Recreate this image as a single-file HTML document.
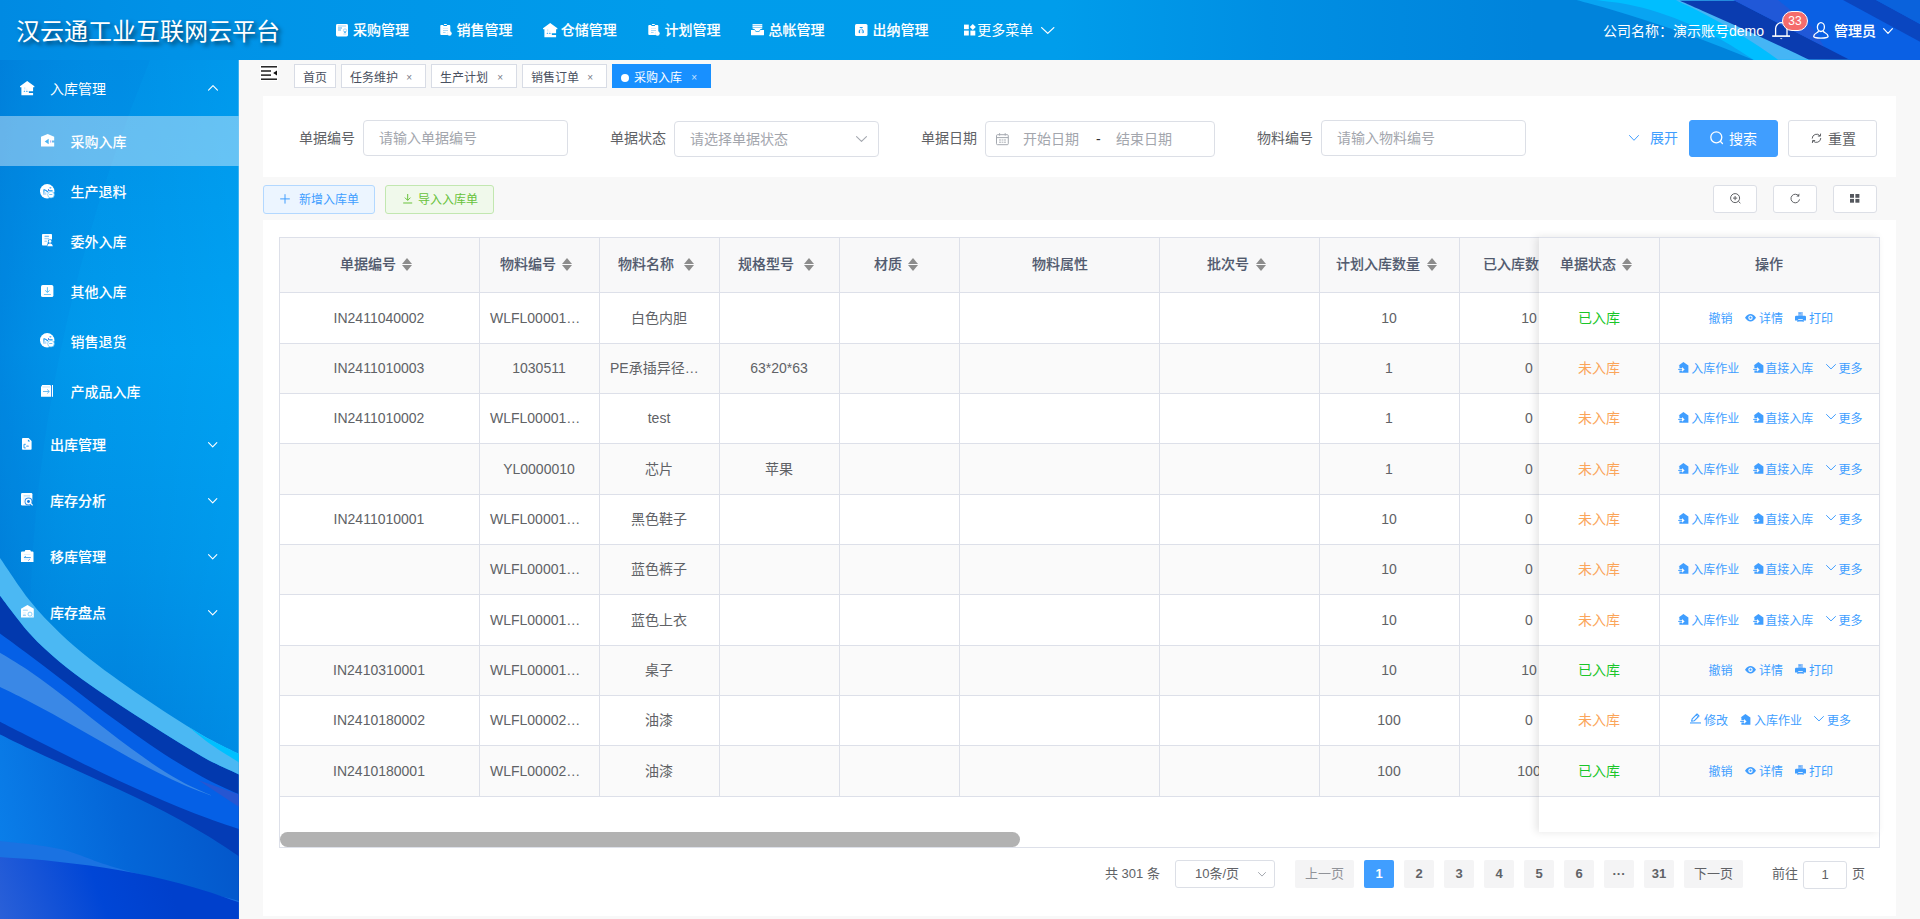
<!DOCTYPE html>
<html lang="zh-CN"><head><meta charset="utf-8"><title>采购入库</title><style>
*{box-sizing:border-box;margin:0;padding:0}
html,body{width:1920px;height:919px;overflow:hidden;background:#f8f8f8;font-family:"Liberation Sans","Noto Sans CJK SC",sans-serif;font-size:14px;color:#606266}
.a{position:absolute}
.t{position:absolute;white-space:nowrap;line-height:20px;height:20px}
#hdr{position:absolute;left:0;top:0;width:1920px;height:60px;overflow:hidden;background:#0093e6}
#side{position:absolute;left:0;top:60px;width:239px;height:859px;overflow:hidden;background:#f8f8f8}
.w{color:#fff}
.b{font-weight:500;-webkit-text-stroke:.12px currentColor}
.bb{font-weight:700}
.m{font-weight:500}
.card{position:absolute;background:#fff}
.inp{position:absolute;border:1px solid #dcdfe6;border-radius:4px;background:#fff}
.ph{color:#a3a6ad}
.tag{position:absolute;top:64px;height:24px;border:1px solid #d8dce5;background:#fff;font-size:12px;color:#495060;line-height:22px;white-space:nowrap}
.btn{position:absolute;border-radius:3px;border:1px solid #dcdfe6;background:#fff}
.th{position:absolute;top:0;height:54px;line-height:54px;font-weight:700;color:#515a6e;text-align:center;white-space:nowrap;font-size:14px}
.vl{position:absolute;width:1px;background:#dde0e9}
.hl{position:absolute;height:1px;background:#dde0e9}
.td{position:absolute;text-align:center;white-space:nowrap;color:#606266;font-size:14px;height:20px;line-height:20px}
.lk{color:#409eff;font-size:12px}
.pg{position:absolute;top:860px;height:28px;line-height:28px;border-radius:2px;background:#f4f4f5;color:#606266;font-weight:700;font-size:13px;text-align:center;min-width:30px}
svg{position:absolute;overflow:visible}
</style></head><body>
<div id="hdr"><svg style="left:0;top:0" width="1920" height="60" viewBox="0 0 1920 60" preserveAspectRatio="none">
<defs>
<linearGradient id="hg" x1="0" y1="0" x2="1" y2="0">
<stop offset="0" stop-color="#008ae2"/><stop offset=".09" stop-color="#0092e7"/><stop offset=".35" stop-color="#009ceb"/><stop offset=".55" stop-color="#009deb"/><stop offset=".66" stop-color="#008fe3"/><stop offset=".8" stop-color="#0083db"/><stop offset="1" stop-color="#0083db"/>
</linearGradient>
<linearGradient id="hsoft" gradientUnits="userSpaceOnUse" x1="1590" y1="30" x2="1612" y2="-8">
<stop offset="0" stop-color="#0a9cf0" stop-opacity=".55"/><stop offset="1" stop-color="#06b0fa" stop-opacity="1"/>
</linearGradient>
</defs>
<rect width="1920" height="60" fill="url(#hg)"/>
<path d="M1574.0 -0.7 C1580.0 1.0 1598.1 5.8 1610.1 9.3 C1622.2 12.9 1634.2 16.6 1646.3 20.4 C1658.3 24.3 1670.4 28.4 1682.4 32.6 C1694.5 36.8 1706.5 41.3 1718.6 45.9 C1730.6 50.5 1748.7 57.8 1754.7 60.2 L1920 60 L1920 0Z" fill="#08a4f2"/>
<path d="M1595.0 -0.1 C1600.3 0.6 1616.2 2.2 1626.8 4.2 C1637.4 6.3 1648.0 9.0 1658.6 12.4 C1669.2 15.8 1679.8 19.8 1690.4 24.4 C1701.0 29.1 1711.6 34.4 1722.2 40.3 C1732.8 46.2 1748.7 56.8 1754.0 60.1 L1920 60 L1920 0Z" fill="#00beff"/>
<path d="M1676.0 0.3 C1679.4 1.9 1689.6 6.6 1696.4 10.0 C1703.2 13.4 1710.0 17.0 1716.8 20.8 C1723.6 24.5 1730.4 28.5 1737.2 32.6 C1744.0 36.8 1750.8 41.1 1757.6 45.6 C1764.4 50.1 1774.6 57.3 1778.0 59.7 L1920 60 L1920 0Z" fill="#45b5f5"/>
<path d="M1680.0 0.7 C1684.3 2.6 1697.2 8.3 1705.8 12.2 C1714.4 16.0 1723.0 19.9 1731.6 23.8 C1740.2 27.7 1748.8 31.6 1757.4 35.6 C1766.0 39.5 1774.6 43.5 1783.2 47.5 C1791.8 51.5 1804.7 57.6 1809.0 59.6 L1920 60 L1920 0Z" fill="#0a3cb0"/>
<path d="M1733.5 0 L1920 0 L1920 60 L1850 60Z" fill="#0a60e4"/>
<path d="M1733.5 0 L1778 0 L1812 27 L1824 46.6Z" fill="#2058d8"/>
<path d="M1843 0 L1920 41.7 L1920 24 L1876 0Z" fill="#0a46c0"/>
<path d="M1876 0 L1920 24 L1920 0Z" fill="#0a62dc"/>
</svg><div class="t w" style="left:16px;top:14px;height:36px;line-height:36px;font-size:24px;text-shadow:3px 3px 4px rgba(0,0,0,.55)">汉云通工业互联网云平台</div><div class="t w b" style="left:353px;top:20px">采购管理</div><div class="t w b" style="left:456.6px;top:20px">销售管理</div><div class="t w b" style="left:560.8px;top:20px">仓储管理</div><div class="t w b" style="left:664.6px;top:20px">计划管理</div><div class="t w b" style="left:768.5px;top:20px">总帐管理</div><div class="t w b" style="left:872.5px;top:20px">出纳管理</div><div class="t w " style="left:977.3px;top:20px">更多菜单</div><svg style="left:336px;top:23.5px" width="12" height="12.4" viewBox="0 0 12 12.4" ><rect x="0" y="0" width="12" height="12.4" rx="1.4" fill="#fff"/><rect x="2" y="1.5" width="8" height="1" fill="#9fd4f7"/><rect x="2" y="3.5" width="4" height="1" fill="#55b4f2"/><rect x="2" y="5.5" width="3" height="1" fill="#55b4f2"/><circle cx="9" cy="6.5" r="1.6" fill="none" stroke="#9fd4f7" stroke-width="0.9"/><rect x="8" y="7.6" width="2" height="1" fill="#1a9af0"/><rect x="7.4" y="9.2" width="3" height="1.6" fill="#cfe9fb"/></svg><svg style="left:440.2px;top:24px" width="12" height="12" viewBox="0 0 12 12" ><path d="M0.3 2 Q0.3 1.1 1.2 1.1 L3.2 1.1 L3.6 2 L6.8 2 L7.2 1.1 L9.4 1.1 Q10.3 1.1 10.3 2 L10.3 11 L1.2 11 Q0.3 11 0.3 10.1Z" fill="#fff"/><rect x="3.9" y="0" width="3" height="1.1" rx="0.5" fill="#fff"/><rect x="3" y="3.9" width="5" height="0.9" fill="#cfe9fb"/><rect x="3" y="6" width="5" height="0.9" fill="#9fd4f7"/><rect x="3" y="8" width="2.6" height="0.9" fill="#9fd4f7"/><circle cx="9.5" cy="9.5" r="2.2" fill="#fff"/><path d="M7.6 8.2 A2.3 2.3 0 0 0 7.6 10.8" fill="none" stroke="#cfe9fb" stroke-width="0.6"/></svg><svg style="left:542.6px;top:22.6px" width="14.4" height="14.2" viewBox="0 0 14.4 14.2"><path d="M7.2 0 L14.4 5.2 L14.4 6.2 L13.1 6.2 L13.1 10.3 L8.6 10.3 L8.6 12.1 L13.1 12.1 L13.1 14.2 L1.4 14.2 L1.4 6.2 L0 6.2 L0 5.2Z" fill="#fff"/><rect x="4.1" y="6.3" width="1.2" height="2.2" fill="#cfe9fb"/><rect x="5.6" y="7.8" width="2" height="0.8" fill="#e2f2fc"/><rect x="3.7" y="9.7" width="1.5" height="1.1" rx="0.5" fill="#1a9af0"/><rect x="6" y="9.7" width="1.7" height="1.1" rx="0.5" fill="#1a9af0"/><path d="M8.9 10.3 L7.6 11.2 L8.9 12.1Z" fill="#fff"/><path d="M9.6 9.6 L8 11.2 L9.6 12.8" fill="none" stroke="#fff" stroke-width="0.1"/></svg><svg style="left:648.2px;top:24px" width="12" height="12" viewBox="0 0 12 12" ><path d="M0.3 2 Q0.3 1.1 1.2 1.1 L3.2 1.1 L3.6 2 L6.8 2 L7.2 1.1 L9.4 1.1 Q10.3 1.1 10.3 2 L10.3 11 L1.2 11 Q0.3 11 0.3 10.1Z" fill="#fff"/><rect x="3.9" y="0" width="3" height="1.1" rx="0.5" fill="#fff"/><rect x="3" y="3.9" width="5" height="0.9" fill="#cfe9fb"/><rect x="3" y="6" width="5" height="0.9" fill="#9fd4f7"/><rect x="3" y="8" width="2.6" height="0.9" fill="#9fd4f7"/><circle cx="9.5" cy="9.5" r="2.2" fill="#fff"/><path d="M7.6 8.2 A2.3 2.3 0 0 0 7.6 10.8" fill="none" stroke="#cfe9fb" stroke-width="0.6"/></svg><svg style="left:751px;top:24px" width="13" height="11.4" viewBox="0 0 13 11.4" ><rect x="1.5" y="0.1" width="9.8" height="1.1" fill="#fff"/><rect x="1.5" y="1.2" width="9.8" height="0.8" fill="#a8daf8"/><rect x="1.5" y="2" width="9.8" height="1.2" fill="#fff"/><rect x="1.5" y="3.2" width="9.8" height="0.8" fill="#a8daf8"/><path d="M1.5 4 L11.3 4 L11.3 4.6 L9.3 5.2 L8 7.2 L5 7.2 L3.6 5.2 L1.5 4.6Z" fill="#fff"/><path d="M0 6 L3.6 6 L5 8 L8 8 L9.4 6 L13 6 L13 10.7 Q13 11.3 12.4 11.3 L0.6 11.3 Q0 11.3 0 10.7Z" fill="#fff"/></svg><svg style="left:855.3px;top:24px" width="12.5" height="12" viewBox="0 0 12.5 12" ><rect x="0" y="0" width="12.5" height="12" rx="1.5" fill="#fff"/><rect x="4.6" y="2.9" width="3.2" height="1.1" rx="0.5" fill="#1a9af0"/><path d="M5 5.2 Q3.2 6.6 3.6 8.4 Q3.9 9.3 5.2 9.2 Q4.4 7.2 5.6 5.4Z M7.5 5.2 Q9.3 6.6 8.9 8.4 Q8.6 9.3 7.3 9.2 Q8.1 7.2 6.9 5.4Z" fill="#1a9af0"/><circle cx="6.25" cy="5.1" r="0.5" fill="#1a9af0"/><rect x="5.6" y="6.2" width="1.3" height="3" rx="0.6" fill="#d6edfc"/></svg><svg style="left:964px;top:24.3px" width="12" height="12" viewBox="0 0 12 12" ><rect x="0" y="0.6" width="4.8" height="4.6" fill="#fff"/><rect x="0" y="6.6" width="4.8" height="4.9" fill="#fff"/><rect x="6.4" y="6.6" width="4.9" height="4.9" fill="#fff"/><path d="M8.8 0 L11.8 3 L8.8 6 L5.8 3Z" fill="#fff"/></svg><svg style="left:1040.5px;top:27px" width="13.5" height="7" viewBox="0 0 13.5 7" ><path d="M0.65 0.65 L6.75 6.35 L12.85 0.65" fill="none" stroke="#fff" stroke-width="1.3" stroke-linecap="round" stroke-linejoin="round"/></svg><div class="t w" style="left:1603px;top:21px">公司名称：演示账号demo</div><svg style="left:1772px;top:22px" width="18" height="18" viewBox="0 0 18 18" ><path d="M3.6 14 L3.6 6.6 A5.7 5.9 0 0 1 15 6.6 L15 14" fill="none" stroke="#fff" stroke-width="1.3"/><rect x="0.2" y="13.3" width="17.8" height="1.6" fill="#fff"/><path d="M7.8 16.2 L10.6 16.2 L9.2 17.2Z" fill="#fff"/></svg><div class="a" style="left:1782px;top:11px;width:26px;height:20px;border-radius:10px;background:#f56c6c;border:1px solid #fff;color:#fff;font-size:12px;line-height:18px;text-align:center">33</div><svg style="left:1813px;top:21.5px" width="16" height="17" viewBox="0 0 16 17" ><ellipse cx="7.9" cy="5.1" rx="3.5" ry="4.4" fill="none" stroke="#fff" stroke-width="1.3"/><path d="M5.6 8.6 Q5.4 10.2 3.4 11 Q0.8 12.2 0.7 14.4 Q0.8 16.1 7.9 16.1 Q15 16.1 15.1 14.4 Q15 12.2 12.4 11 Q10.4 10.2 10.2 8.6" fill="none" stroke="#fff" stroke-width="1.3" stroke-linejoin="round"/></svg><div class="t w b" style="left:1834px;top:21px">管理员</div><svg style="left:1883px;top:28px" width="10" height="6" viewBox="0 0 10 6" ><path d="M0.60 0.60 L5.00 5.40 L9.40 0.60" fill="none" stroke="#fff" stroke-width="1.2" stroke-linecap="round" stroke-linejoin="round"/></svg></div>
<div id="side"><svg style="left:0;top:0" width="239" height="859" viewBox="0 60 239 859" preserveAspectRatio="none">
<defs>
<clipPath id="sclip"><rect x="0" y="60" width="238.7" height="859"/></clipPath>
<linearGradient id="sg" x1="0" y1="0" x2="0" y2="1">
<stop offset="0" stop-color="#0090e6"/><stop offset=".34" stop-color="#009cee"/><stop offset=".58" stop-color="#0091e6"/><stop offset=".815" stop-color="#007edb"/><stop offset="1" stop-color="#007edb"/>
</linearGradient>
<linearGradient id="sh" x1="0" y1="0" x2="1" y2="0">
<stop offset="0" stop-color="#0064c8" stop-opacity=".3"/><stop offset=".5" stop-color="#0090e0" stop-opacity="0"/><stop offset=".5" stop-color="#00b4ff" stop-opacity="0"/><stop offset="1" stop-color="#00b4ff" stop-opacity=".25"/>
</linearGradient>
<linearGradient id="slow" gradientUnits="userSpaceOnUse" x1="0" y1="850" x2="239" y2="800">
<stop offset="0" stop-color="#0a7ee9"/><stop offset=".5" stop-color="#0466d8"/><stop offset="1" stop-color="#0456ca"/>
</linearGradient>
<linearGradient id="sbot" gradientUnits="userSpaceOnUse" x1="0" y1="919" x2="160" y2="860">
<stop offset="0" stop-color="#2a60d8"/><stop offset=".6" stop-color="#0046d6"/><stop offset="1" stop-color="#0040cc"/>
</linearGradient>
</defs>
<g clip-path="url(#sclip)">
<rect x="0" y="60" width="239" height="859" fill="url(#sg)"/>
<rect x="0" y="60" width="239" height="720" fill="url(#sh)"/>
<path d="M0 60 L150 60 Q40 330 30 600 L0 600Z" fill="#0058c8" opacity=".05"/>
<path d="M0.0 595.7 C5.0 602.1 19.9 622.7 29.9 633.7 C39.8 644.8 49.8 653.4 59.8 661.9 C69.7 670.4 79.7 677.4 89.6 684.6 C99.6 691.7 109.5 698.1 119.5 704.7 C129.5 711.3 139.4 717.6 149.4 724.0 C159.3 730.3 169.3 736.8 179.2 742.8 C189.2 748.9 199.2 755.1 209.1 760.4 C219.1 765.6 234.0 772.0 239.0 774.4 L239 919 L0 919 Z" fill="#0239ae"/>
<path d="M0.0 633.6 C5.0 637.3 19.9 648.1 29.9 655.5 C39.8 662.9 49.8 670.6 59.8 678.2 C69.7 685.7 79.7 693.4 89.6 700.9 C99.6 708.4 109.5 715.9 119.5 723.1 C129.5 730.3 139.4 737.5 149.4 744.2 C159.3 750.9 169.3 757.5 179.2 763.5 C189.2 769.5 199.2 775.3 209.1 780.4 C219.1 785.5 234.0 792.0 239.0 794.3 L239 919 L0 919 Z" fill="#0560e6"/>
<path d="M198 780 L239 794.5 L239 807Z" fill="#2656d2"/>
<path d="M0.0 652.7 C4.4 655.4 17.6 663.2 26.4 669.1 C35.2 675.0 44.0 681.5 52.8 688.0 C61.5 694.5 70.3 701.5 79.1 708.3 C87.9 715.2 96.7 722.2 105.5 729.0 C114.3 735.8 123.1 742.7 131.9 749.1 C140.7 755.5 149.5 761.9 158.2 767.5 C167.0 773.2 175.8 778.6 184.6 783.2 C193.4 787.9 206.6 793.2 211.0 795.2 L211.0 795.6 C206.6 793.9 193.4 789.1 184.6 785.3 C175.8 781.5 167.0 777.2 158.2 772.8 C149.5 768.5 140.7 763.7 131.9 758.9 C123.1 754.2 114.3 749.1 105.5 744.1 C96.7 739.1 87.9 734.0 79.1 729.0 C70.3 724.0 61.5 718.9 52.8 714.0 C44.0 709.2 35.2 704.4 26.4 699.9 C17.6 695.4 4.4 689.2 0.0 687.0Z" fill="#3a88e6"/>
<path d="M0.0 721.7 C5.0 724.3 19.9 731.9 29.9 737.0 C39.8 742.0 49.8 747.1 59.8 752.1 C69.7 757.1 79.7 762.0 89.6 766.8 C99.6 771.7 109.5 776.5 119.5 781.1 C129.5 785.7 139.4 790.2 149.4 794.6 C159.3 799.0 169.3 803.2 179.2 807.2 C189.2 811.2 199.2 815.1 209.1 818.7 C219.1 822.4 234.0 827.3 239.0 829.0 L239 919 L0 919 Z" fill="#043cb6"/>
<path d="M0.0 734.6 C5.0 737.0 19.9 744.4 29.9 749.1 C39.8 753.8 49.8 758.3 59.8 762.8 C69.7 767.3 79.7 771.7 89.6 776.2 C99.6 780.7 109.5 785.1 119.5 789.7 C129.5 794.4 139.4 799.0 149.4 804.0 C159.3 809.0 169.3 814.1 179.2 819.5 C189.2 825.0 199.2 830.7 209.1 836.8 C219.1 842.9 234.0 853.1 239.0 856.4 L239 919 L0 919 Z" fill="url(#slow)"/>
<path d="M0.0 841.0 C10.0 842.3 40.5 844.5 60.0 849.0 C79.5 853.5 87.2 859.3 117.0 868.0 C146.8 876.7 218.7 895.5 239.0 901.0 L239 919 L0 919 Z" fill="#1a72e2"/>
<path d="M0.0 857.0 C5.0 857.4 19.9 858.3 29.9 859.1 C39.8 860.0 49.8 860.9 59.8 861.9 C69.7 863.0 79.7 864.2 89.6 865.6 C99.6 867.0 109.5 868.5 119.5 870.2 C129.5 872.0 139.4 873.9 149.4 876.0 C159.3 878.2 169.3 880.6 179.2 883.2 C189.2 885.9 199.2 888.7 209.1 891.9 C219.1 895.1 234.0 900.6 239.0 902.3 L239 919 L0 919 Z" fill="url(#sbot)"/>
<path d="M0.0 558.0 C5.0 565.1 19.9 588.3 29.9 600.8 C39.8 613.3 49.8 623.3 59.8 633.0 C69.7 642.7 79.7 650.8 89.6 658.8 C99.6 666.7 109.5 673.9 119.5 681.0 C129.5 688.1 139.4 694.9 149.4 701.5 C159.3 708.2 169.3 714.8 179.2 721.1 C189.2 727.3 199.2 733.6 209.1 739.1 C219.1 744.6 234.0 751.6 239.0 754.1 L239.0 774.4 C234.0 772.0 219.1 765.6 209.1 760.4 C199.2 755.1 189.2 748.9 179.2 742.8 C169.3 736.8 159.3 730.3 149.4 724.0 C139.4 717.6 129.5 711.3 119.5 704.7 C109.5 698.1 99.6 691.7 89.6 684.6 C79.7 677.4 69.7 670.4 59.8 661.9 C49.8 653.4 39.8 644.8 29.9 633.7 C19.9 622.7 5.0 602.1 0.0 595.7Z" fill="#4bb8f3"/>
<path d="M188.5 726.7 C191.9 728.7 200.7 734.6 209.1 739.1 C217.5 743.7 234.0 751.6 239.0 754.1 L239.0 762.5 C234.4 759.5 219.8 750.8 211.4 744.8 C203.0 738.8 192.3 729.7 188.5 726.7Z" fill="#00c0ff"/>
</g></svg><svg style="left:0;top:56px" width="239" height="50"><rect x="0" y="0" width="238.7" height="50" fill="#fff" fill-opacity=".4"/></svg><div class="t w " style="left:50px;top:19px">入库管理</div><div class="t w b" style="left:50px;top:375px">出库管理</div><div class="t w b" style="left:50px;top:431px">库存分析</div><div class="t w b" style="left:50px;top:487px">移库管理</div><div class="t w b" style="left:50px;top:543px">库存盘点</div><div class="t w m" style="left:70.4px;top:72px">采购入库</div><div class="t w m" style="left:70.4px;top:122px">生产退料</div><div class="t w m" style="left:70.4px;top:172px">委外入库</div><div class="t w m" style="left:70.4px;top:222px">其他入库</div><div class="t w m" style="left:70.4px;top:272px">销售退货</div><div class="t w m" style="left:70.4px;top:322px">产成品入库</div><svg style="left:20px;top:20.599999999999994px" width="14.4" height="14.2" viewBox="0 0 14.4 14.2"><path d="M7.2 0 L14.4 5.2 L14.4 6.2 L13.1 6.2 L13.1 10.3 L8.6 10.3 L8.6 12.1 L13.1 12.1 L13.1 14.2 L1.4 14.2 L1.4 6.2 L0 6.2 L0 5.2Z" fill="#fff"/><rect x="4.1" y="6.3" width="1.2" height="2.2" fill="#cfe9fb"/><rect x="5.6" y="7.8" width="2" height="0.8" fill="#e2f2fc"/><rect x="3.7" y="9.7" width="1.5" height="1.1" rx="0.5" fill="#1a9af0"/><rect x="6" y="9.7" width="1.7" height="1.1" rx="0.5" fill="#1a9af0"/><path d="M8.9 10.3 L7.6 11.2 L8.9 12.1Z" fill="#fff"/><path d="M9.6 9.6 L8 11.2 L9.6 12.8" fill="none" stroke="#fff" stroke-width="0.1"/></svg><svg style="left:40.8px;top:74.4px" width="13.2" height="12.6" viewBox="0 0 13.2 12.6" ><path d="M6.7 0 L13.2 2.8 L13.2 6.4 L11 6.4 L11 8.6 L13.2 8.6 L13.2 12.6 L0 12.6 L0 2.8Z" fill="#fff"/><path d="M3.7 7.5 L7.7 4.8 L7.7 10.2Z" fill="#4bb4f2"/><rect x="9.2" y="6.4" width="1" height="2.2" fill="#a9a3f0"/></svg><svg style="left:40px;top:123.5px" width="14.6" height="14.6" viewBox="0 0 14.6 14.6" ><circle cx="7.2" cy="7.3" r="7.2" fill="#fff"/><path d="M3.6 5.6 L6 6.6 L8 8" fill="none" stroke="#1a9af0" stroke-width="1.1"/><rect x="3.4" y="6" width="1" height="4.4" fill="#1a9af0"/><rect x="3.4" y="8.4" width="3" height="2.4" fill="#b9dcf8"/><rect x="8" y="5" width="1" height="2" fill="#6d7fe8"/><rect x="9" y="6.2" width="3.6" height="0.8" fill="#1a9af0"/><ellipse cx="10.4" cy="3.8" rx="1.1" ry="0.6" fill="#1a9af0"/><circle cx="11" cy="10.7" r="3.3" fill="#fff" stroke="#5cc0f6" stroke-width="0.7"/><rect x="9.2" y="10.2" width="3.2" height="0.9" rx="0.4" fill="#4aaef2"/></svg><svg style="left:41.9px;top:174.3px" width="12" height="12.8" viewBox="0 0 12 12.8" ><path d="M0.8 0 L9.2 0 Q10 0 10 0.8 L10 11.5 L0.8 11.5 Q0 11.5 0 10.7 L0 0.8 Q0 0 0.8 0Z" fill="#fff"/><rect x="2.4" y="1.8" width="4.7" height="0.9" rx="0.4" fill="#4aaef2"/><rect x="2.4" y="3.9" width="4.7" height="1.4" fill="#a8d8f8"/><rect x="2.4" y="6.7" width="2.6" height="0.9" rx="0.4" fill="#4aaef2"/><path d="M4.6 12.6 L5.6 9.6 L6.2 5.8 L9.6 5.2 L10.6 8 L11.6 12.6Z" fill="#0a8ee8"/><circle cx="8" cy="7.4" r="1.4" fill="#fff"/><path d="M5.2 12.3 Q5.6 9.4 8 9.2 Q10.4 9.4 10.9 12.3Z" fill="#fff"/></svg><svg style="left:41px;top:224.89999999999998px" width="12.4" height="12.1" viewBox="0 0 12.4 12.1" ><rect x="0" y="0" width="12.4" height="12.1" rx="1.7" fill="#fff"/><path d="M6.4 2.2 L6.4 7.2 M4.2 5.4 L6.4 7.5 L8.6 5.4" fill="none" stroke="#4ab8f4" stroke-width="0.9"/><rect x="2.8" y="9.2" width="7.2" height="0.9" rx="0.4" fill="#4ab8f4"/></svg><svg style="left:40px;top:273.4px" width="14.6" height="14.6" viewBox="0 0 14.6 14.6" ><circle cx="7.2" cy="7.3" r="7.2" fill="#fff"/><path d="M3.6 5.6 L6 6.6 L8 8" fill="none" stroke="#1a9af0" stroke-width="1.1"/><rect x="3.4" y="6" width="1" height="4.4" fill="#1a9af0"/><rect x="3.4" y="8.4" width="3" height="2.4" fill="#b9dcf8"/><rect x="8" y="5" width="1" height="2" fill="#6d7fe8"/><rect x="9" y="6.2" width="3.6" height="0.8" fill="#1a9af0"/><ellipse cx="10.4" cy="3.8" rx="1.1" ry="0.6" fill="#1a9af0"/><circle cx="11" cy="10.7" r="3.3" fill="#fff" stroke="#5cc0f6" stroke-width="0.7"/><rect x="9.2" y="10.2" width="3.2" height="0.9" rx="0.4" fill="#4aaef2"/></svg><svg style="left:41px;top:325px" width="12" height="11.8" viewBox="0 0 12 11.8" ><path d="M1.2 0 L9.4 0 L10 1 L10 11.8 L0 11.8 L0 2Z" fill="#fff"/><rect x="11" y="0" width="1" height="11.8" fill="#fff"/><rect x="10" y="0.6" width="1" height="11.2" fill="#4d8ef0" opacity=".55"/><rect x="1.4" y="1.3" width="7.6" height="1.3" fill="#d4ebfb"/><path d="M2 6.5 L8.2 6.5 M6.2 4.5 L8.3 6.5 L6.2 8.5" fill="none" stroke="#5ab4f0" stroke-width="0.9"/></svg><svg style="left:22.2px;top:378px" width="9.6" height="11.8" viewBox="0 0 9.6 11.8" ><path d="M0.9 0 L6.6 0 L9.6 3 L9.6 11 Q9.6 11.8 8.8 11.8 L0.9 11.8 Q0 11.8 0 11 L0 0.9 Q0 0 0.9 0Z" fill="#fff"/><path d="M5.9 1.6 L5.9 3.6 L8 3.6 Q7.4 2.2 5.9 1.6Z" fill="#1a9af0"/><path d="M3.8 6.3 L2 6.3 L2 9.9 L3.8 9.9" fill="none" stroke="#1a9af0" stroke-width="0.9"/><rect x="4.2" y="7.5" width="2.6" height="1.3" rx="0.4" fill="#5da8ee"/></svg><svg style="left:21.4px;top:433.4px" width="12.2" height="13" viewBox="0 0 12.2 13" ><path d="M1.2 0 L10.2 0 Q11.4 0 11.4 1.2 L11.4 7 L9 12.5 L1.2 12.5 Q0 12.5 0 11.3 L0 1.2 Q0 0 1.2 0Z" fill="#fff"/><rect x="2.6" y="2.4" width="6.6" height="1" fill="#a8d4f6"/><rect x="2.2" y="4.7" width="2.6" height="0.7" fill="#cfe6fa"/><rect x="2.2" y="6.7" width="2" height="0.7" fill="#cfe6fa"/><rect x="2.2" y="8.7" width="2" height="0.7" fill="#cfe6fa"/><circle cx="7.5" cy="8.5" r="3.9" fill="#2f8fe8"/><circle cx="7.5" cy="8.5" r="3" fill="#fff"/><circle cx="7.5" cy="8.5" r="1.4" fill="#0a78e0"/><path d="M9.2 10.6 L10 9.8 L12 12 L11.2 12.8Z" fill="#fff"/></svg><svg style="left:21px;top:490px" width="12.5" height="11.9" viewBox="0 0 12.5 11.9" ><path d="M1 1.5 L3.6 1.5 L4.4 0 L9.2 0 L10 1.5 L11.5 1.5 Q12.5 1.5 12.5 2.5 L12.5 11.9 L0 11.9 L0 2.5 Q0 1.5 1 1.5Z" fill="#fff"/><rect x="3" y="4.2" width="6.6" height="0.8" fill="#dcedfb"/><path d="M3 7.6 L9.8 7.6 M3.4 7.4 L4.8 6" fill="none" stroke="#3aa0ee" stroke-width="1"/><rect x="3" y="9.3" width="4" height="0.8" fill="#dcedfb"/><path d="M7.2 10.6 L8.8 9.2" fill="none" stroke="#5b86ea" stroke-width="0.9"/></svg><svg style="left:21px;top:545.4px" width="12.8" height="12.6" viewBox="0 0 12.8 12.6" ><path d="M6.5 0 L12.8 3.7 L12.8 12.6 L0 12.6 L0 3.7Z" fill="#fff"/><rect x="1.9" y="4.7" width="5" height="0.9" rx="0.4" fill="#7cc6f6"/><rect x="1.9" y="7.5" width="3" height="0.8" fill="#d6ecfb"/><rect x="1.9" y="9.7" width="3" height="0.9" rx="0.4" fill="#3aa8f0"/><circle cx="9" cy="9.1" r="2" fill="none" stroke="#6cc4f6" stroke-width="0.8"/><path d="M10.4 10.6 L11.4 11.6" stroke="#8fd0f8" stroke-width="0.7"/></svg><svg style="left:208.3px;top:24.599999999999994px" width="10" height="5.6" viewBox="0 0 10 5.6" ><path d="M0.55 5.05 L5.00 0.55 L9.45 5.05" fill="none" stroke="#fff" stroke-width="1.1" stroke-linecap="round" stroke-linejoin="round"/></svg><svg style="left:208.3px;top:381.5px" width="9.4" height="5.4" viewBox="0 0 9.4 5.4" ><path d="M0.55 0.55 L4.70 4.85 L8.85 0.55" fill="none" stroke="#fff" stroke-width="1.1" stroke-linecap="round" stroke-linejoin="round"/></svg><svg style="left:208.3px;top:437.5px" width="9.4" height="5.4" viewBox="0 0 9.4 5.4" ><path d="M0.55 0.55 L4.70 4.85 L8.85 0.55" fill="none" stroke="#fff" stroke-width="1.1" stroke-linecap="round" stroke-linejoin="round"/></svg><svg style="left:208.3px;top:493.5px" width="9.4" height="5.4" viewBox="0 0 9.4 5.4" ><path d="M0.55 0.55 L4.70 4.85 L8.85 0.55" fill="none" stroke="#fff" stroke-width="1.1" stroke-linecap="round" stroke-linejoin="round"/></svg><svg style="left:208.3px;top:549.5px" width="9.4" height="5.4" viewBox="0 0 9.4 5.4" ><path d="M0.55 0.55 L4.70 4.85 L8.85 0.55" fill="none" stroke="#fff" stroke-width="1.1" stroke-linecap="round" stroke-linejoin="round"/></svg></div>
<svg style="left:260px;top:65px" width="18" height="16" viewBox="0 0 18 16" ><rect x="0" y="0" width="18" height="16" fill="#fff"/><rect x="1" y="1.1" width="16" height="1.4" fill="#111"/><rect x="1" y="5.3" width="10" height="1.4" fill="#111"/><rect x="1" y="9.4" width="10" height="1.4" fill="#111"/><rect x="1" y="13.5" width="16" height="1.4" fill="#111"/><path d="M17 5.6 L17 10.6 L13.2 8.1Z" fill="#111"/></svg><div class="tag" style="left:294px;width:42px;"><span class="a" style="left:8px;top:1.5px">首页</span></div><div class="tag" style="left:341px;width:85px;"><span class="a" style="left:8px;top:1.5px">任务维护</span><span class="a" style="right:13px;top:1.5px;font-size:10px;opacity:.75">×</span></div><div class="tag" style="left:431px;width:86px;"><span class="a" style="left:8px;top:1.5px">生产计划</span><span class="a" style="right:13px;top:1.5px;font-size:10px;opacity:.75">×</span></div><div class="tag" style="left:522px;width:85px;"><span class="a" style="left:8px;top:1.5px">销售订单</span><span class="a" style="right:13px;top:1.5px;font-size:10px;opacity:.75">×</span></div><div class="tag" style="left:612px;width:99px;background:#1890ff;border-color:#1890ff;color:#fff;"><span class="a" style="left:8px;top:8.5px;width:8px;height:8px;border-radius:50%;background:#fff"></span><span class="a" style="left:21px;top:1.5px">采购入库</span><span class="a" style="right:13px;top:1.5px;font-size:10px;opacity:.75">×</span></div>
<div class="card" style="left:263px;top:96px;width:1633px;height:81px"></div><div class="t" style="left:299px;top:128px">单据编号</div><div class="inp" style="left:363px;top:120px;width:205px;height:36px"><span class="t ph" style="left:15px;top:7px">请输入单据编号</span></div><div class="t" style="left:610px;top:128px">单据状态</div><div class="inp" style="left:674px;top:121px;width:205px;height:36px"><span class="t ph" style="left:15px;top:7px">请选择单据状态</span></div><div class="t" style="left:921px;top:128px">单据日期</div><div class="inp" style="left:985px;top:121px;width:230px;height:36px"><span class="t ph" style="left:37px;top:7px">开始日期</span><span class="t" style="left:110px;top:7px;color:#303133">-</span><span class="t ph" style="left:130px;top:7px">结束日期</span></div><div class="t" style="left:1257px;top:128px">物料编号</div><div class="inp" style="left:1321px;top:120px;width:205px;height:36px"><span class="t ph" style="left:15px;top:7px">请输入物料编号</span></div><div class="t" style="left:1650px;top:128px;color:#409eff">展开</div><div class="btn" style="left:1689px;top:120px;width:89px;height:37px;background:#409eff;border-color:#409eff"><span class="t w" style="left:39px;top:8px">搜索</span></div><div class="btn" style="left:1788px;top:120px;width:89px;height:37px"><span class="t" style="left:39px;top:8px">重置</span></div><svg style="left:856px;top:136px" width="11" height="6" viewBox="0 0 11 6" ><path d="M0.55 0.55 L5.50 5.45 L10.45 0.55" fill="none" stroke="#a4a8af" stroke-width="1.1" stroke-linecap="round" stroke-linejoin="round"/></svg><svg style="left:996px;top:132.8px" width="13" height="12.4" viewBox="0 0 13 12.4" ><rect x="0.5" y="1.7" width="11.8" height="10" rx="1" fill="none" stroke="#a4a8af" stroke-width="1"/><path d="M0.5 4.6 L12.3 4.6" stroke="#a4a8af" stroke-width="1"/><path d="M3.6 0.2 L3.6 2.6 M9.2 0.2 L9.2 2.6" stroke="#a4a8af" stroke-width="1"/><path d="M3 7 L5 7 M5.6 7 L7.4 7 M8 7 L10 7 M3 9.2 L5 9.2 M5.6 9.2 L7.4 9.2 M8 9.2 L10 9.2" stroke="#a4a8af" stroke-width="0.9"/></svg><svg style="left:1629px;top:135.2px" width="10" height="5.8" viewBox="0 0 10 5.8" ><path d="M0.50 0.50 L5.00 5.30 L9.50 0.50" fill="none" stroke="#409eff" stroke-width="1" stroke-linecap="round" stroke-linejoin="round"/></svg><svg style="left:1710.4px;top:131.2px" width="15.0" height="15.0" viewBox="0 0 15.0 15.0" ><circle cx="6.30" cy="6.30" r="5.5" fill="none" stroke="#fff" stroke-width="1.3"/><path d="M10.26 10.26 L12.46 12.46" stroke="#fff" stroke-width="1.3" stroke-linecap="round"/></svg><svg style="left:1810.5px;top:132.6px" width="11" height="10.6" viewBox="0 0 11 10.6" ><path d="M1.2 5.6 A4.4 4.4 0 0 1 9 2.8" fill="none" stroke="#606266" stroke-width="1"/><path d="M9.8 5 A4.4 4.4 0 0 1 2 7.8" fill="none" stroke="#606266" stroke-width="1"/><path d="M9.6 0.6 L9.4 3.2 L6.8 3" fill="none" stroke="#606266" stroke-width="1"/><path d="M1.4 10 L1.6 7.4 L4.2 7.6" fill="none" stroke="#606266" stroke-width="1"/></svg>
<div class="btn" style="left:263px;top:185px;width:112px;height:29px;background:#ecf5ff;border-color:#b3d8ff"><span class="t" style="left:35px;top:4px;font-size:12px;color:#409eff">新增入库单</span></div><div class="btn" style="left:385px;top:185px;width:109px;height:29px;background:#f0f9eb;border-color:#c2e7b0"><span class="t" style="left:32px;top:4px;font-size:12px;color:#67c23a">导入入库单</span></div><div class="btn" style="left:1713px;top:185px;width:44px;height:28px"></div><div class="btn" style="left:1773px;top:185px;width:44px;height:28px"></div><div class="btn" style="left:1833px;top:185px;width:44px;height:28px"></div><svg style="left:280px;top:194px" width="10" height="10" viewBox="0 0 10 10" ><path d="M5 0.2 L5 9.6 M0.2 4.9 L9.8 4.9" stroke="#409eff" stroke-width="1"/></svg><svg style="left:402.8px;top:194px" width="9.4" height="9.6" viewBox="0 0 9.4 9.6" ><path d="M4.7 0 L4.7 6.2 M1.9 3.6 L4.7 6.4 L7.5 3.6 M0.2 9 L9.2 9" fill="none" stroke="#67c23a" stroke-width="1"/></svg><svg style="left:1729.5px;top:193.2px" width="11" height="11" viewBox="0 0 11 11" ><circle cx="5.1" cy="5.1" r="4.5" fill="none" stroke="#606266" stroke-width="1"/><path d="M5.1 3 L5.1 7.2 M3 5.1 L7.2 5.1" stroke="#606266" stroke-width="1"/><path d="M8.4 8.4 L10.4 10.2" stroke="#606266" stroke-width="1"/></svg><svg style="left:1790.2px;top:193.3px" width="11" height="11" viewBox="0 0 11 11" ><path d="M8.9 3.2 A4.3 4.3 0 1 0 9.5 6.4" fill="none" stroke="#606266" stroke-width="1"/><path d="M9.4 0.6 L9.2 3.6 L6.3 3.4Z" fill="#606266"/></svg><svg style="left:1850.4px;top:194.1px" width="9.6" height="8.8" viewBox="0 0 9.6 8.8" ><rect x="0" y="0" width="4" height="3.8" fill="#55585e"/><rect x="5.4" y="0" width="4" height="3.8" fill="#55585e"/><rect x="0" y="4.9" width="4" height="3.8" fill="#55585e"/><rect x="5.4" y="4.9" width="4" height="3.8" fill="#55585e"/></svg>
<div class="card" style="left:263px;top:220px;width:1633px;height:696px"></div>
<div class="a" style="left:279px;top:237px;width:1601px;height:56px;background:#f8f8f9"></div><div class="a" style="left:279px;top:343px;width:1601px;height:50px;background:#fafafa"></div><div class="a" style="left:279px;top:443px;width:1601px;height:51px;background:#fafafa"></div><div class="a" style="left:279px;top:544px;width:1601px;height:50px;background:#fafafa"></div><div class="a" style="left:279px;top:645px;width:1601px;height:50px;background:#fafafa"></div><div class="a" style="left:279px;top:745px;width:1601px;height:51px;background:#fafafa"></div><div class="hl" style="left:279px;top:237px;width:1601px"></div><div class="hl" style="left:279px;top:292px;width:1601px"></div><div class="hl" style="left:279px;top:343px;width:1601px"></div><div class="hl" style="left:279px;top:393px;width:1601px"></div><div class="hl" style="left:279px;top:443px;width:1601px"></div><div class="hl" style="left:279px;top:494px;width:1601px"></div><div class="hl" style="left:279px;top:544px;width:1601px"></div><div class="hl" style="left:279px;top:594px;width:1601px"></div><div class="hl" style="left:279px;top:645px;width:1601px"></div><div class="hl" style="left:279px;top:695px;width:1601px"></div><div class="hl" style="left:279px;top:745px;width:1601px"></div><div class="hl" style="left:279px;top:796px;width:1601px"></div><div class="hl" style="left:279px;top:847px;width:1601px"></div><div class="vl" style="left:279px;top:237px;height:560px"></div><div class="vl" style="left:479px;top:237px;height:560px"></div><div class="vl" style="left:599px;top:237px;height:560px"></div><div class="vl" style="left:719px;top:237px;height:560px"></div><div class="vl" style="left:839px;top:237px;height:560px"></div><div class="vl" style="left:959px;top:237px;height:560px"></div><div class="vl" style="left:1159px;top:237px;height:560px"></div><div class="vl" style="left:1319px;top:237px;height:560px"></div><div class="vl" style="left:1459px;top:237px;height:560px"></div><div class="vl" style="left:279px;top:237px;height:611px"></div><div class="vl" style="left:1879px;top:237px;height:611px"></div><div class="t b" style="left:340px;top:254px;color:#515a6e">单据编号</div><div class="a" style="left:402px;top:258px;width:0;height:0;border:5px solid transparent;border-top:0;border-bottom:6px solid #8c8c8c"></div><div class="a" style="left:402px;top:265px;width:0;height:0;border:5px solid transparent;border-bottom:0;border-top:6px solid #8c8c8c"></div><div class="t b" style="left:500px;top:254px;color:#515a6e">物料编号</div><div class="a" style="left:562px;top:258px;width:0;height:0;border:5px solid transparent;border-top:0;border-bottom:6px solid #8c8c8c"></div><div class="a" style="left:562px;top:265px;width:0;height:0;border:5px solid transparent;border-bottom:0;border-top:6px solid #8c8c8c"></div><div class="t b" style="left:618px;top:254px;color:#515a6e">物料名称</div><div class="a" style="left:684px;top:258px;width:0;height:0;border:5px solid transparent;border-top:0;border-bottom:6px solid #8c8c8c"></div><div class="a" style="left:684px;top:265px;width:0;height:0;border:5px solid transparent;border-bottom:0;border-top:6px solid #8c8c8c"></div><div class="t b" style="left:738px;top:254px;color:#515a6e">规格型号</div><div class="a" style="left:804px;top:258px;width:0;height:0;border:5px solid transparent;border-top:0;border-bottom:6px solid #8c8c8c"></div><div class="a" style="left:804px;top:265px;width:0;height:0;border:5px solid transparent;border-bottom:0;border-top:6px solid #8c8c8c"></div><div class="t b" style="left:874px;top:254px;color:#515a6e">材质</div><div class="a" style="left:908px;top:258px;width:0;height:0;border:5px solid transparent;border-top:0;border-bottom:6px solid #8c8c8c"></div><div class="a" style="left:908px;top:265px;width:0;height:0;border:5px solid transparent;border-bottom:0;border-top:6px solid #8c8c8c"></div><div class="t b" style="left:1032px;top:254px;color:#515a6e">物料属性</div><div class="t b" style="left:1207px;top:254px;color:#515a6e">批次号</div><div class="a" style="left:1256px;top:258px;width:0;height:0;border:5px solid transparent;border-top:0;border-bottom:6px solid #8c8c8c"></div><div class="a" style="left:1256px;top:265px;width:0;height:0;border:5px solid transparent;border-bottom:0;border-top:6px solid #8c8c8c"></div><div class="t b" style="left:1336px;top:254px;color:#515a6e">计划入库数量</div><div class="a" style="left:1427px;top:258px;width:0;height:0;border:5px solid transparent;border-top:0;border-bottom:6px solid #8c8c8c"></div><div class="a" style="left:1427px;top:265px;width:0;height:0;border:5px solid transparent;border-bottom:0;border-top:6px solid #8c8c8c"></div><div class="t b" style="left:1483px;top:254px;color:#515a6e">已入库数量</div><div class="td" style="left:279px;width:200px;top:308px;">IN2411040002</div><div class="td" style="left:490px;top:308px;text-align:left;">WLFL00001…</div><div class="td" style="left:599px;width:120px;top:308px;">白色内胆</div><div class="td" style="left:1319px;width:140px;top:308px;">10</div><div class="td" style="left:1459px;width:140px;top:308px;">10</div><div class="td" style="left:279px;width:200px;top:358px;">IN2411010003</div><div class="td" style="left:479px;width:120px;top:358px;">1030511</div><div class="td" style="left:610px;top:358px;text-align:left;">PE承插异径…</div><div class="td" style="left:719px;width:120px;top:358px;">63*20*63</div><div class="td" style="left:1319px;width:140px;top:358px;">1</div><div class="td" style="left:1459px;width:140px;top:358px;">0</div><div class="td" style="left:279px;width:200px;top:408px;">IN2411010002</div><div class="td" style="left:490px;top:408px;text-align:left;">WLFL00001…</div><div class="td" style="left:599px;width:120px;top:408px;">test</div><div class="td" style="left:1319px;width:140px;top:408px;">1</div><div class="td" style="left:1459px;width:140px;top:408px;">0</div><div class="td" style="left:479px;width:120px;top:459px;">YL0000010</div><div class="td" style="left:599px;width:120px;top:459px;">芯片</div><div class="td" style="left:719px;width:120px;top:459px;">苹果</div><div class="td" style="left:1319px;width:140px;top:459px;">1</div><div class="td" style="left:1459px;width:140px;top:459px;">0</div><div class="td" style="left:279px;width:200px;top:509px;">IN2411010001</div><div class="td" style="left:490px;top:509px;text-align:left;">WLFL00001…</div><div class="td" style="left:599px;width:120px;top:509px;">黑色鞋子</div><div class="td" style="left:1319px;width:140px;top:509px;">10</div><div class="td" style="left:1459px;width:140px;top:509px;">0</div><div class="td" style="left:490px;top:559px;text-align:left;">WLFL00001…</div><div class="td" style="left:599px;width:120px;top:559px;">蓝色裤子</div><div class="td" style="left:1319px;width:140px;top:559px;">10</div><div class="td" style="left:1459px;width:140px;top:559px;">0</div><div class="td" style="left:490px;top:610px;text-align:left;">WLFL00001…</div><div class="td" style="left:599px;width:120px;top:610px;">蓝色上衣</div><div class="td" style="left:1319px;width:140px;top:610px;">10</div><div class="td" style="left:1459px;width:140px;top:610px;">0</div><div class="td" style="left:279px;width:200px;top:660px;">IN2410310001</div><div class="td" style="left:490px;top:660px;text-align:left;">WLFL00001…</div><div class="td" style="left:599px;width:120px;top:660px;">桌子</div><div class="td" style="left:1319px;width:140px;top:660px;">10</div><div class="td" style="left:1459px;width:140px;top:660px;">10</div><div class="td" style="left:279px;width:200px;top:710px;">IN2410180002</div><div class="td" style="left:490px;top:710px;text-align:left;">WLFL00002…</div><div class="td" style="left:599px;width:120px;top:710px;">油漆</div><div class="td" style="left:1319px;width:140px;top:710px;">100</div><div class="td" style="left:1459px;width:140px;top:710px;">0</div><div class="td" style="left:279px;width:200px;top:761px;">IN2410180001</div><div class="td" style="left:490px;top:761px;text-align:left;">WLFL00002…</div><div class="td" style="left:599px;width:120px;top:761px;">油漆</div><div class="td" style="left:1319px;width:140px;top:761px;">100</div><div class="td" style="left:1459px;width:140px;top:761px;">100</div>
<div class="a" style="left:1539px;top:237px;width:341px;height:595px;background:#fff;box-shadow:-3px 0 8px rgba(0,0,0,.10)"></div><div class="a" style="left:1539px;top:237px;width:341px;height:56px;background:#f8f8f9"></div><div class="a" style="left:1539px;top:343px;width:341px;height:50px;background:#fafafa"></div><div class="a" style="left:1539px;top:443px;width:341px;height:51px;background:#fafafa"></div><div class="a" style="left:1539px;top:544px;width:341px;height:50px;background:#fafafa"></div><div class="a" style="left:1539px;top:645px;width:341px;height:50px;background:#fafafa"></div><div class="a" style="left:1539px;top:745px;width:341px;height:51px;background:#fafafa"></div><div class="hl" style="left:1539px;top:237px;width:341px"></div><div class="hl" style="left:1539px;top:292px;width:341px"></div><div class="hl" style="left:1539px;top:343px;width:341px"></div><div class="hl" style="left:1539px;top:393px;width:341px"></div><div class="hl" style="left:1539px;top:443px;width:341px"></div><div class="hl" style="left:1539px;top:494px;width:341px"></div><div class="hl" style="left:1539px;top:544px;width:341px"></div><div class="hl" style="left:1539px;top:594px;width:341px"></div><div class="hl" style="left:1539px;top:645px;width:341px"></div><div class="hl" style="left:1539px;top:695px;width:341px"></div><div class="hl" style="left:1539px;top:745px;width:341px"></div><div class="hl" style="left:1539px;top:796px;width:341px"></div><div class="vl" style="left:1659px;top:237px;height:560px"></div><div class="vl" style="left:1879px;top:237px;height:596px"></div><div class="t b" style="left:1560px;top:254px;color:#515a6e">单据状态</div><div class="a" style="left:1622px;top:258px;width:0;height:0;border:5px solid transparent;border-top:0;border-bottom:6px solid #8c8c8c"></div><div class="a" style="left:1622px;top:265px;width:0;height:0;border:5px solid transparent;border-bottom:0;border-top:6px solid #8c8c8c"></div><div class="t b" style="left:1755px;top:254px;color:#515a6e">操作</div><div class="td" style="left:1539px;width:120px;top:308px;color:#1ac62a">已入库</div><div class="t lk" style="left:1708.5px;top:309px">撤销</div><svg style="left:1745px;top:314.1px" width="11" height="7.4" viewBox="0 0 11 7.4" ><path d="M0 3.7 Q2.4 0 5.5 0 Q8.6 0 11 3.7 Q8.6 7.4 5.5 7.4 Q2.4 7.4 0 3.7Z" fill="#409eff"/><circle cx="5.5" cy="3.7" r="2.2" fill="#fff"/><circle cx="5.5" cy="3.7" r="1.1" fill="#409eff"/></svg><div class="t lk" style="left:1759px;top:309px">详情</div><svg style="left:1795px;top:312.2px" width="11" height="10" viewBox="0 0 11 10" ><rect x="3.2" y="0" width="4.6" height="4.6" fill="#8fbff8"/><rect x="3.8" y="0.8" width="2" height="0.8" fill="#409eff"/><path d="M1.2 3.8 L9.8 3.8 Q11 3.8 11 5 L11 8.4 L0 8.4 L0 5 Q0 3.8 1.2 3.8Z" fill="#409eff"/><rect x="2.4" y="6.6" width="6.2" height="3.4" fill="#409eff"/><rect x="3.2" y="7.2" width="4.6" height="0.8" fill="#fff"/><rect x="3.2" y="9.2" width="4.6" height="0.8" fill="#bcd9fb"/></svg><div class="t lk" style="left:1809px;top:309px">打印</div><div class="td" style="left:1539px;width:120px;top:358px;color:#fba55a">未入库</div><svg style="left:1678.4px;top:362px" width="10.4" height="10.8" viewBox="0 0 10.4 10.8" ><path d="M5.4 0 L10.4 3.4 L10.4 10.8 L1.4 10.8 L1.4 8.6 L4 8.6 L4 9.8 L6.6 7.4 L4 5 L4 6.2 L1.4 6.2 L1.4 3.4 L0.6 3.4Z" fill="#409eff"/><rect x="0.2" y="6.9" width="3.8" height="1" fill="#409eff"/></svg><div class="t lk" style="left:1691.3px;top:359px">入库作业</div><svg style="left:1752.5px;top:362px" width="10.4" height="10.8" viewBox="0 0 10.4 10.8" ><path d="M5.4 0 L10.4 3.4 L10.4 10.8 L1.4 10.8 L1.4 8.6 L4 8.6 L4 9.8 L6.6 7.4 L4 5 L4 6.2 L1.4 6.2 L1.4 3.4 L0.6 3.4Z" fill="#409eff"/><rect x="0.2" y="6.9" width="3.8" height="1" fill="#409eff"/></svg><div class="t lk" style="left:1765.2px;top:359px">直接入库</div><svg style="left:1826.3px;top:364.2px" width="10" height="5.4" viewBox="0 0 10 5.4" ><path d="M0.50 0.50 L5.00 4.90 L9.50 0.50" fill="none" stroke="#409eff" stroke-width="1" stroke-linecap="round" stroke-linejoin="round"/></svg><div class="t lk" style="left:1838.6px;top:359px">更多</div><div class="td" style="left:1539px;width:120px;top:408px;color:#fba55a">未入库</div><svg style="left:1678.4px;top:412px" width="10.4" height="10.8" viewBox="0 0 10.4 10.8" ><path d="M5.4 0 L10.4 3.4 L10.4 10.8 L1.4 10.8 L1.4 8.6 L4 8.6 L4 9.8 L6.6 7.4 L4 5 L4 6.2 L1.4 6.2 L1.4 3.4 L0.6 3.4Z" fill="#409eff"/><rect x="0.2" y="6.9" width="3.8" height="1" fill="#409eff"/></svg><div class="t lk" style="left:1691.3px;top:409px">入库作业</div><svg style="left:1752.5px;top:412px" width="10.4" height="10.8" viewBox="0 0 10.4 10.8" ><path d="M5.4 0 L10.4 3.4 L10.4 10.8 L1.4 10.8 L1.4 8.6 L4 8.6 L4 9.8 L6.6 7.4 L4 5 L4 6.2 L1.4 6.2 L1.4 3.4 L0.6 3.4Z" fill="#409eff"/><rect x="0.2" y="6.9" width="3.8" height="1" fill="#409eff"/></svg><div class="t lk" style="left:1765.2px;top:409px">直接入库</div><svg style="left:1826.3px;top:414.2px" width="10" height="5.4" viewBox="0 0 10 5.4" ><path d="M0.50 0.50 L5.00 4.90 L9.50 0.50" fill="none" stroke="#409eff" stroke-width="1" stroke-linecap="round" stroke-linejoin="round"/></svg><div class="t lk" style="left:1838.6px;top:409px">更多</div><div class="td" style="left:1539px;width:120px;top:459px;color:#fba55a">未入库</div><svg style="left:1678.4px;top:463px" width="10.4" height="10.8" viewBox="0 0 10.4 10.8" ><path d="M5.4 0 L10.4 3.4 L10.4 10.8 L1.4 10.8 L1.4 8.6 L4 8.6 L4 9.8 L6.6 7.4 L4 5 L4 6.2 L1.4 6.2 L1.4 3.4 L0.6 3.4Z" fill="#409eff"/><rect x="0.2" y="6.9" width="3.8" height="1" fill="#409eff"/></svg><div class="t lk" style="left:1691.3px;top:460px">入库作业</div><svg style="left:1752.5px;top:463px" width="10.4" height="10.8" viewBox="0 0 10.4 10.8" ><path d="M5.4 0 L10.4 3.4 L10.4 10.8 L1.4 10.8 L1.4 8.6 L4 8.6 L4 9.8 L6.6 7.4 L4 5 L4 6.2 L1.4 6.2 L1.4 3.4 L0.6 3.4Z" fill="#409eff"/><rect x="0.2" y="6.9" width="3.8" height="1" fill="#409eff"/></svg><div class="t lk" style="left:1765.2px;top:460px">直接入库</div><svg style="left:1826.3px;top:465.2px" width="10" height="5.4" viewBox="0 0 10 5.4" ><path d="M0.50 0.50 L5.00 4.90 L9.50 0.50" fill="none" stroke="#409eff" stroke-width="1" stroke-linecap="round" stroke-linejoin="round"/></svg><div class="t lk" style="left:1838.6px;top:460px">更多</div><div class="td" style="left:1539px;width:120px;top:509px;color:#fba55a">未入库</div><svg style="left:1678.4px;top:513px" width="10.4" height="10.8" viewBox="0 0 10.4 10.8" ><path d="M5.4 0 L10.4 3.4 L10.4 10.8 L1.4 10.8 L1.4 8.6 L4 8.6 L4 9.8 L6.6 7.4 L4 5 L4 6.2 L1.4 6.2 L1.4 3.4 L0.6 3.4Z" fill="#409eff"/><rect x="0.2" y="6.9" width="3.8" height="1" fill="#409eff"/></svg><div class="t lk" style="left:1691.3px;top:510px">入库作业</div><svg style="left:1752.5px;top:513px" width="10.4" height="10.8" viewBox="0 0 10.4 10.8" ><path d="M5.4 0 L10.4 3.4 L10.4 10.8 L1.4 10.8 L1.4 8.6 L4 8.6 L4 9.8 L6.6 7.4 L4 5 L4 6.2 L1.4 6.2 L1.4 3.4 L0.6 3.4Z" fill="#409eff"/><rect x="0.2" y="6.9" width="3.8" height="1" fill="#409eff"/></svg><div class="t lk" style="left:1765.2px;top:510px">直接入库</div><svg style="left:1826.3px;top:515.2px" width="10" height="5.4" viewBox="0 0 10 5.4" ><path d="M0.50 0.50 L5.00 4.90 L9.50 0.50" fill="none" stroke="#409eff" stroke-width="1" stroke-linecap="round" stroke-linejoin="round"/></svg><div class="t lk" style="left:1838.6px;top:510px">更多</div><div class="td" style="left:1539px;width:120px;top:559px;color:#fba55a">未入库</div><svg style="left:1678.4px;top:563px" width="10.4" height="10.8" viewBox="0 0 10.4 10.8" ><path d="M5.4 0 L10.4 3.4 L10.4 10.8 L1.4 10.8 L1.4 8.6 L4 8.6 L4 9.8 L6.6 7.4 L4 5 L4 6.2 L1.4 6.2 L1.4 3.4 L0.6 3.4Z" fill="#409eff"/><rect x="0.2" y="6.9" width="3.8" height="1" fill="#409eff"/></svg><div class="t lk" style="left:1691.3px;top:560px">入库作业</div><svg style="left:1752.5px;top:563px" width="10.4" height="10.8" viewBox="0 0 10.4 10.8" ><path d="M5.4 0 L10.4 3.4 L10.4 10.8 L1.4 10.8 L1.4 8.6 L4 8.6 L4 9.8 L6.6 7.4 L4 5 L4 6.2 L1.4 6.2 L1.4 3.4 L0.6 3.4Z" fill="#409eff"/><rect x="0.2" y="6.9" width="3.8" height="1" fill="#409eff"/></svg><div class="t lk" style="left:1765.2px;top:560px">直接入库</div><svg style="left:1826.3px;top:565.2px" width="10" height="5.4" viewBox="0 0 10 5.4" ><path d="M0.50 0.50 L5.00 4.90 L9.50 0.50" fill="none" stroke="#409eff" stroke-width="1" stroke-linecap="round" stroke-linejoin="round"/></svg><div class="t lk" style="left:1838.6px;top:560px">更多</div><div class="td" style="left:1539px;width:120px;top:610px;color:#fba55a">未入库</div><svg style="left:1678.4px;top:614px" width="10.4" height="10.8" viewBox="0 0 10.4 10.8" ><path d="M5.4 0 L10.4 3.4 L10.4 10.8 L1.4 10.8 L1.4 8.6 L4 8.6 L4 9.8 L6.6 7.4 L4 5 L4 6.2 L1.4 6.2 L1.4 3.4 L0.6 3.4Z" fill="#409eff"/><rect x="0.2" y="6.9" width="3.8" height="1" fill="#409eff"/></svg><div class="t lk" style="left:1691.3px;top:611px">入库作业</div><svg style="left:1752.5px;top:614px" width="10.4" height="10.8" viewBox="0 0 10.4 10.8" ><path d="M5.4 0 L10.4 3.4 L10.4 10.8 L1.4 10.8 L1.4 8.6 L4 8.6 L4 9.8 L6.6 7.4 L4 5 L4 6.2 L1.4 6.2 L1.4 3.4 L0.6 3.4Z" fill="#409eff"/><rect x="0.2" y="6.9" width="3.8" height="1" fill="#409eff"/></svg><div class="t lk" style="left:1765.2px;top:611px">直接入库</div><svg style="left:1826.3px;top:616.2px" width="10" height="5.4" viewBox="0 0 10 5.4" ><path d="M0.50 0.50 L5.00 4.90 L9.50 0.50" fill="none" stroke="#409eff" stroke-width="1" stroke-linecap="round" stroke-linejoin="round"/></svg><div class="t lk" style="left:1838.6px;top:611px">更多</div><div class="td" style="left:1539px;width:120px;top:660px;color:#1ac62a">已入库</div><div class="t lk" style="left:1708.5px;top:661px">撤销</div><svg style="left:1745px;top:666.1px" width="11" height="7.4" viewBox="0 0 11 7.4" ><path d="M0 3.7 Q2.4 0 5.5 0 Q8.6 0 11 3.7 Q8.6 7.4 5.5 7.4 Q2.4 7.4 0 3.7Z" fill="#409eff"/><circle cx="5.5" cy="3.7" r="2.2" fill="#fff"/><circle cx="5.5" cy="3.7" r="1.1" fill="#409eff"/></svg><div class="t lk" style="left:1759px;top:661px">详情</div><svg style="left:1795px;top:664.2px" width="11" height="10" viewBox="0 0 11 10" ><rect x="3.2" y="0" width="4.6" height="4.6" fill="#8fbff8"/><rect x="3.8" y="0.8" width="2" height="0.8" fill="#409eff"/><path d="M1.2 3.8 L9.8 3.8 Q11 3.8 11 5 L11 8.4 L0 8.4 L0 5 Q0 3.8 1.2 3.8Z" fill="#409eff"/><rect x="2.4" y="6.6" width="6.2" height="3.4" fill="#409eff"/><rect x="3.2" y="7.2" width="4.6" height="0.8" fill="#fff"/><rect x="3.2" y="9.2" width="4.6" height="0.8" fill="#bcd9fb"/></svg><div class="t lk" style="left:1809px;top:661px">打印</div><div class="td" style="left:1539px;width:120px;top:710px;color:#fba55a">未入库</div><svg style="left:1690px;top:714px" width="11" height="9.6" viewBox="0 0 11 9.6" ><rect x="0" y="8.4" width="11" height="1.1" fill="#409eff"/><path d="M1.6 7.2 L2.2 4.8 L7 0 L9 2 L4.2 6.8Z" fill="none" stroke="#409eff" stroke-width="1.1" stroke-linejoin="round"/><path d="M6.2 1 L8 2.8" stroke="#409eff" stroke-width="1"/></svg><div class="t lk" style="left:1704px;top:711px">修改</div><svg style="left:1740.3px;top:714px" width="10.4" height="10.8" viewBox="0 0 10.4 10.8" ><path d="M5.4 0 L10.4 3.4 L10.4 10.8 L1.4 10.8 L1.4 8.6 L4 8.6 L4 9.8 L6.6 7.4 L4 5 L4 6.2 L1.4 6.2 L1.4 3.4 L0.6 3.4Z" fill="#409eff"/><rect x="0.2" y="6.9" width="3.8" height="1" fill="#409eff"/></svg><div class="t lk" style="left:1754px;top:711px">入库作业</div><svg style="left:1814.3px;top:716.2px" width="10" height="5.4" viewBox="0 0 10 5.4" ><path d="M0.50 0.50 L5.00 4.90 L9.50 0.50" fill="none" stroke="#409eff" stroke-width="1" stroke-linecap="round" stroke-linejoin="round"/></svg><div class="t lk" style="left:1827px;top:711px">更多</div><div class="td" style="left:1539px;width:120px;top:761px;color:#1ac62a">已入库</div><div class="t lk" style="left:1708.5px;top:762px">撤销</div><svg style="left:1745px;top:767.1px" width="11" height="7.4" viewBox="0 0 11 7.4" ><path d="M0 3.7 Q2.4 0 5.5 0 Q8.6 0 11 3.7 Q8.6 7.4 5.5 7.4 Q2.4 7.4 0 3.7Z" fill="#409eff"/><circle cx="5.5" cy="3.7" r="2.2" fill="#fff"/><circle cx="5.5" cy="3.7" r="1.1" fill="#409eff"/></svg><div class="t lk" style="left:1759px;top:762px">详情</div><svg style="left:1795px;top:765.2px" width="11" height="10" viewBox="0 0 11 10" ><rect x="3.2" y="0" width="4.6" height="4.6" fill="#8fbff8"/><rect x="3.8" y="0.8" width="2" height="0.8" fill="#409eff"/><path d="M1.2 3.8 L9.8 3.8 Q11 3.8 11 5 L11 8.4 L0 8.4 L0 5 Q0 3.8 1.2 3.8Z" fill="#409eff"/><rect x="2.4" y="6.6" width="6.2" height="3.4" fill="#409eff"/><rect x="3.2" y="7.2" width="4.6" height="0.8" fill="#fff"/><rect x="3.2" y="9.2" width="4.6" height="0.8" fill="#bcd9fb"/></svg><div class="t lk" style="left:1809px;top:762px">打印</div>
<div class="a" style="left:280px;top:832px;width:740px;height:15px;border-radius:8px;background:#b2b2b2"></div>
<div class="t" style="left:1105px;top:864px;font-size:13px">共 301 条</div><div class="inp" style="left:1175px;top:860px;width:100px;height:28px;border-radius:3px"><span class="t" style="left:19px;top:3px;font-size:13px">10条/页</span></div><svg style="left:1258px;top:871.5px" width="8" height="4.6" viewBox="0 0 8 4.6" ><path d="M0.50 0.50 L4.00 4.10 L7.50 0.50" fill="none" stroke="#a4a8af" stroke-width="1" stroke-linecap="round" stroke-linejoin="round"/></svg><div class="pg" style="left:1295px;width:59px;font-weight:400;color:#909399">上一页</div><div class="pg" style="left:1364px;width:30px;background:#409eff;color:#fff;">1</div><div class="pg" style="left:1404px;width:30px;">2</div><div class="pg" style="left:1444px;width:30px;">3</div><div class="pg" style="left:1484px;width:30px;">4</div><div class="pg" style="left:1524px;width:30px;">5</div><div class="pg" style="left:1564px;width:30px;">6</div><div class="pg" style="left:1604px;width:30px;">···</div><div class="pg" style="left:1644px;width:30px;">31</div><div class="pg" style="left:1684px;width:59px;font-weight:400">下一页</div><div class="t" style="left:1772px;top:864px;font-size:13px">前往</div><div class="inp" style="left:1803px;top:861px;width:44px;height:28px;border-radius:3px;text-align:center;line-height:26px;font-size:13px">1</div><div class="t" style="left:1852px;top:864px;font-size:13px">页</div>
</body></html>
